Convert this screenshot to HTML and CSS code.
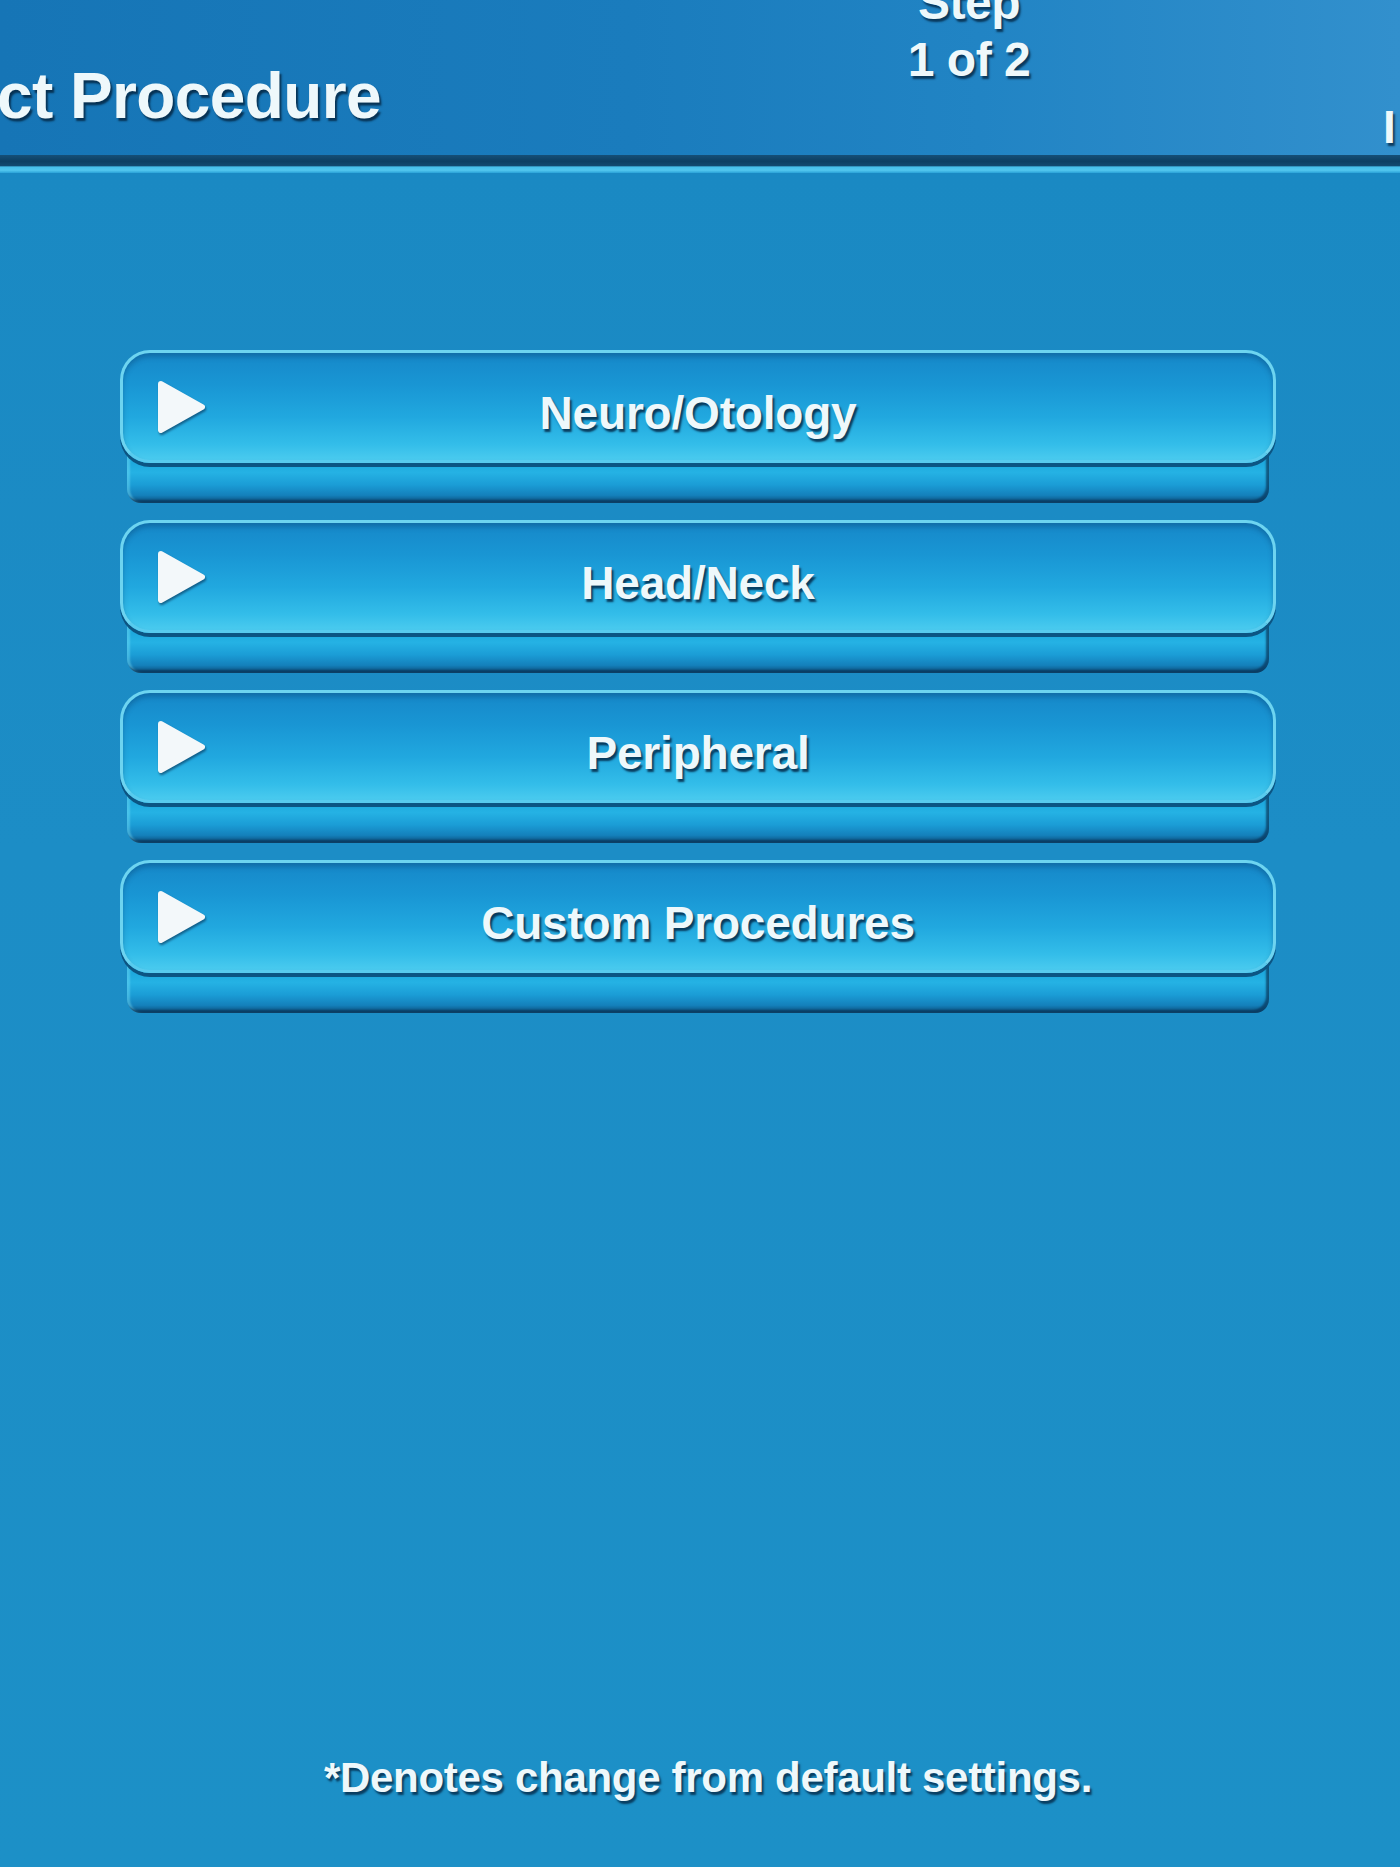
FILE: index.html
```html
<!DOCTYPE html>
<html lang="en">
<head>
<meta charset="utf-8">
<title>Select Procedure</title>
<link rel="stylesheet" href="styles.css">
</head>
<body>
<div class="screen">
  <header class="header">
    <div class="title">ct Procedure</div>
    <div class="step">Step<br>1 of 2</div>
    <div class="edge">I</div>
  </header>
  <div class="rule"></div>
  <main class="main">
    <div class="list">
      <div class="btn">
        <div class="face">
          <svg class="tri" width="50" height="56" viewBox="0 0 50 56"><polygon points="5,5 46,28 5,51" fill="#f3f8fa" stroke="#f3f8fa" stroke-width="6" stroke-linejoin="round"/></svg>
          <span class="label">Neuro/Otology</span>
        </div>
      </div>
      <div class="btn">
        <div class="face">
          <svg class="tri" width="50" height="56" viewBox="0 0 50 56"><polygon points="5,5 46,28 5,51" fill="#f3f8fa" stroke="#f3f8fa" stroke-width="6" stroke-linejoin="round"/></svg>
          <span class="label">Head/Neck</span>
        </div>
      </div>
      <div class="btn">
        <div class="face">
          <svg class="tri" width="50" height="56" viewBox="0 0 50 56"><polygon points="5,5 46,28 5,51" fill="#f3f8fa" stroke="#f3f8fa" stroke-width="6" stroke-linejoin="round"/></svg>
          <span class="label">Peripheral</span>
        </div>
      </div>
      <div class="btn">
        <div class="face">
          <svg class="tri" width="50" height="56" viewBox="0 0 50 56"><polygon points="5,5 46,28 5,51" fill="#f3f8fa" stroke="#f3f8fa" stroke-width="6" stroke-linejoin="round"/></svg>
          <span class="label">Custom Procedures</span>
        </div>
      </div>
    </div>
    <p class="note">*Denotes change from default settings.</p>
  </main>
</div>
</body>
</html>
```
FILE: styles.css
```css
html, body {
  margin: 0;
  padding: 0;
  width: 1400px;
  height: 1867px;
  overflow: hidden;
}
body {
  font-family: "Liberation Sans", Arial, sans-serif;
  font-weight: bold;
  color: #eef8fb;
  background: #1b8cc5;
}
.screen {
  width: 1400px;
  height: 1867px;
  display: flex;
  flex-direction: column;
}
.header {
  height: 155px;
  display: flex;
  align-items: flex-start;
  background: linear-gradient(90deg, #1675b6 0%, #1a7cbd 45%, #2184c4 70%, #3290cd 100%);
  overflow: hidden;
}
.title {
  flex: 0 0 872px;
  margin-left: -3px;
  padding-top: 61px;
  font-size: 64px;
  line-height: 70px;
  letter-spacing: -0.6px;
  text-shadow: 2px 3px 2px rgba(4, 38, 66, 0.85);
  white-space: nowrap;
}
.step {
  flex: 0 0 200px;
  margin-top: -26px;
  text-align: center;
  font-size: 48px;
  line-height: 57px;
  letter-spacing: -0.5px;
  text-shadow: 2px 3px 2px rgba(4, 38, 66, 0.8);
}
.edge {
  margin-left: auto;
  width: 17px;
  padding-top: 101px;
  font-size: 46px;
  line-height: 52px;
  text-shadow: 2px 3px 2px rgba(4, 38, 66, 0.8);
  overflow: hidden;
}
.rule {
  height: 18px;
  background: linear-gradient(180deg, #154f78 0%, #0d3f62 35%, #124a70 60%, #45bfea 66%, #52c6ee 85%, #2aa2d8 100%);
}
.main {
  flex: 1;
  background: linear-gradient(180deg, #1a89c3 0%, #1c8dc6 40%, #1c90c7 100%);
}
.list {
  padding: 177px 131px 0 127px;
  display: flex;
  flex-direction: column;
  gap: 17px;
}
.btn {
  height: 153px;
  border-radius: 30px 30px 14px 14px;
  background: linear-gradient(180deg, #1ea9de 0%, #1ea9de 74%, #25b2e4 80%, #1b9dd6 88%, #1480bb 95%, #0b4b77 100%);
  box-shadow: inset -3px -3px 2px rgba(8, 50, 85, 0.7), inset 3px 0 2px rgba(120, 220, 245, 0.45);
}
.face {
  box-sizing: border-box;
  height: 113px;
  margin: 0 -7px;
  border-radius: 30px;
  border: 3px solid #6dd4f0;
  border-bottom-color: #58cbee;
  background: linear-gradient(180deg, #1688c9 0%, #1996d4 30%, #21a8df 60%, #33bde9 85%, #4acbef 100%);
  box-shadow: 0 4px 0 #0c5583, inset 0 4px 5px rgba(5, 60, 110, 0.35);
  display: grid;
  grid-template-columns: 1fr auto 1fr;
  align-items: center;
}
.tri {
  grid-column: 1;
  grid-row: 1;
  justify-self: start;
  margin-left: 33px;
  filter: drop-shadow(1px 2px 1px rgba(4, 45, 80, 0.6));
}
.label {
  grid-column: 2;
  grid-row: 1;
  padding-top: 12px;
  font-size: 46px;
  line-height: 52px;
  letter-spacing: -0.2px;
  white-space: nowrap;
  text-shadow: 2px 3px 2px rgba(4, 40, 70, 0.85);
}
.note {
  margin: 741px 0 0 0;
  padding-left: 16px;
  text-align: center;
  font-size: 42px;
  line-height: 48px;
  letter-spacing: -0.3px;
  text-shadow: 2px 3px 2px rgba(4, 40, 70, 0.8);
}
```
